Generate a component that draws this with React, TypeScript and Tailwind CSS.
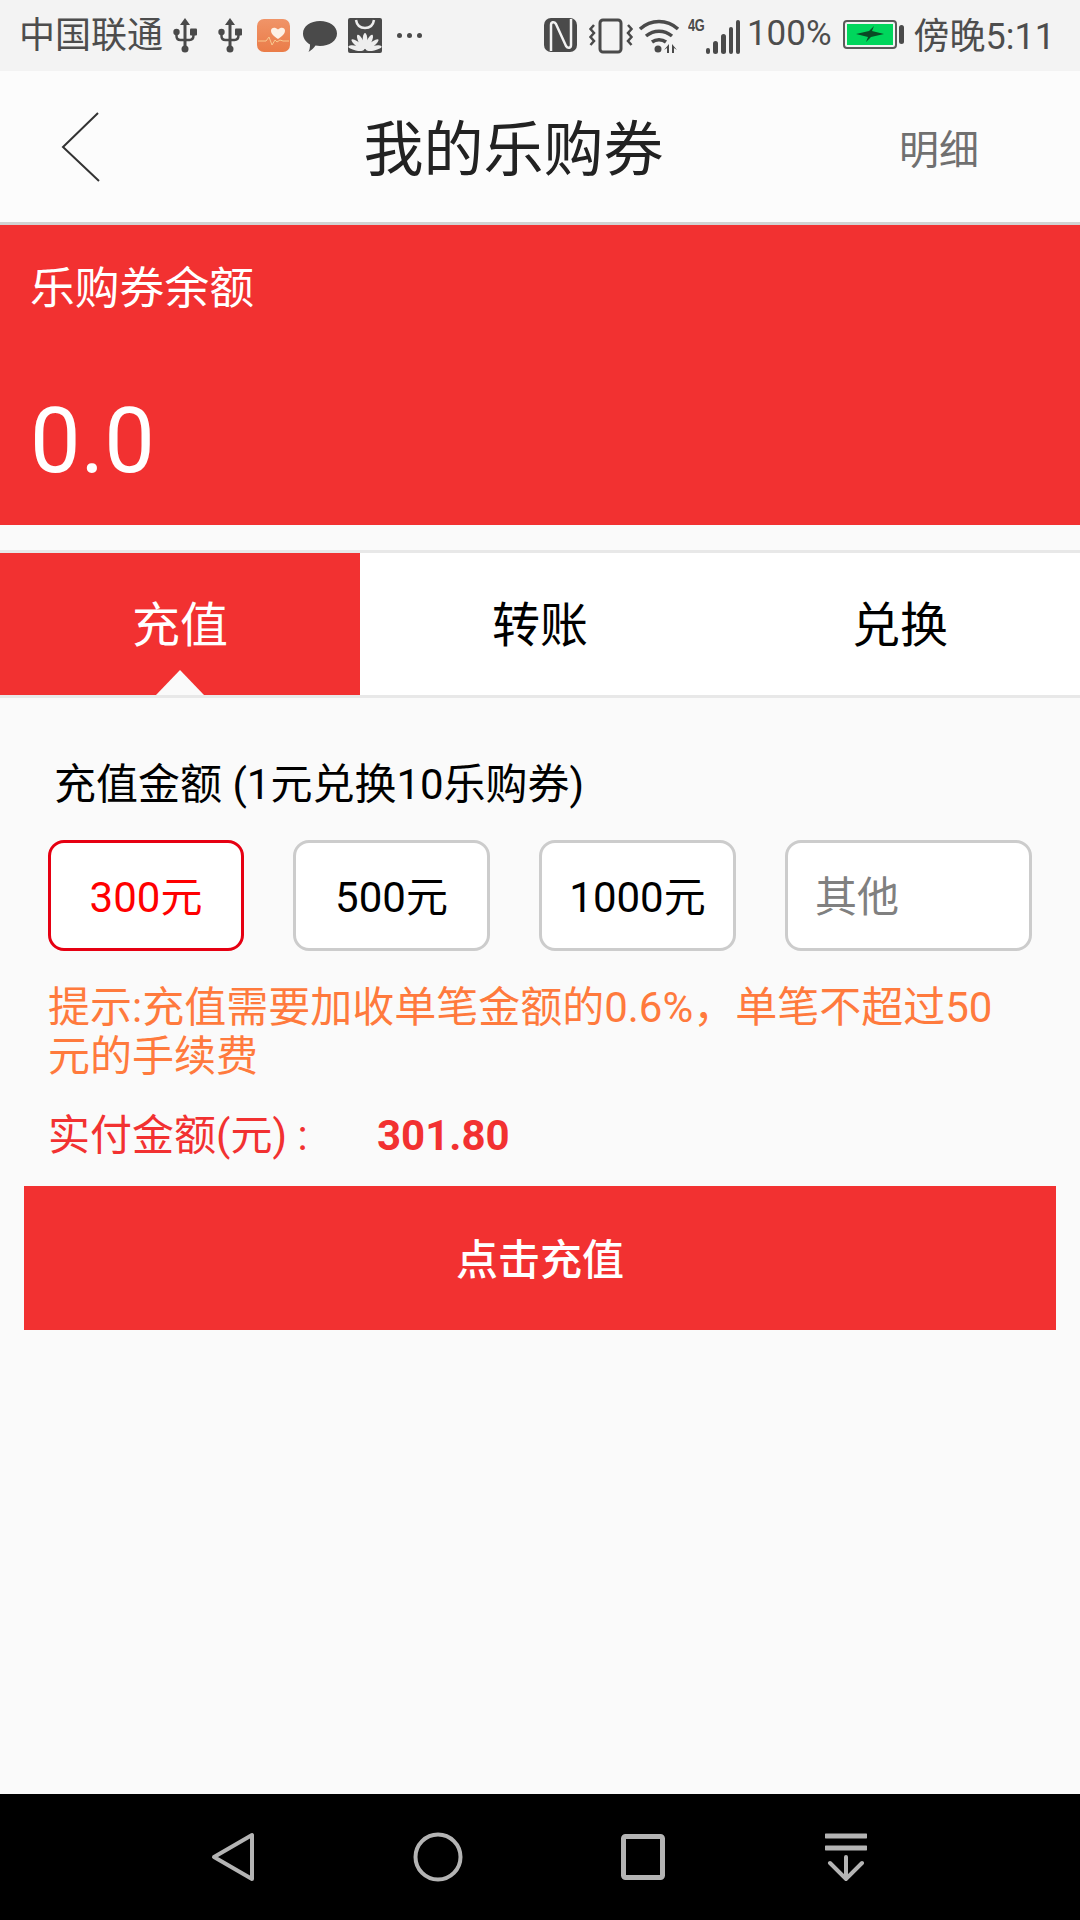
import { useState } from "react";

const font = "font-['Roboto','Noto_Sans_CJK_SC',sans-serif]";

const UsbIcon = () => (
  <svg width="24" height="36" viewBox="0 0 24 36" className="text-[#4a4a4a]">
    <path d="M12 0l5 7h-3.500v22h-3V7H7z" fill="currentColor" />
    <circle cx="12" cy="31" r="3.500" fill="currentColor" />
    <circle cx="3.500" cy="14" r="3.200" fill="currentColor" />
    <rect x="17" y="10.500" width="7" height="7" rx="1" fill="currentColor" />
    <path d="M3.500 15v3c0 3 2 4 4 4h4M20.500 15v2c0 4-2 5-4 5h-4" stroke="currentColor" strokeWidth="2.500" fill="none" />
  </svg>
);

// fan of the brand mark in the status bar
const petals = [-78, -52, -26, 0, 26, 52, 78];

const StatusLeft = () => (
  <div className="flex items-center">
    <span className="text-[36px] leading-none text-[#4d4d4d] ml-[19px] mt-[1px]">中国联通</span>
    <span className="ml-[10px]"><UsbIcon /></span>
    <span className="ml-[21px]"><UsbIcon /></span>
    <svg width="34" height="34" viewBox="0 0 34 34" className="ml-[15px]">
      <defs>
        <linearGradient id="heartBg" x1="0" y1="0" x2="0" y2="1">
          <stop offset="0" stopColor="#f09468" />
          <stop offset="1" stopColor="#ea7c48" />
        </linearGradient>
      </defs>
      <rect width="33" height="33" rx="7" fill="url(#heartBg)" />
      <path d="M21 20c-4-3-7-5-7-8.500 0-3 4-4 7-1 3-3 7-2 7 1 0 3.500-3 5.500-7 8.500z" fill="#fdf1e6" />
      <path d="M1 22h8l3-4 3 8 3-5 2 2 3-2 3 1h6" stroke="#f8c98f" strokeWidth="1" fill="none" />
    </svg>
    <svg width="36" height="34" viewBox="0 0 36 34" className="ml-[11px]">
      <path d="M18 2c9.500 0 17 5 17 12.500S27.500 27 18 27c-1.500 0-3-.2-4.500-.5C12 29 9.500 31 6.500 33c1-2 1.500-4 1.500-7.500C3.500 23 1 19 1 14.500 1 7 8.500 2 18 2z" fill="#4a4a4a" />
    </svg>
    <svg width="34" height="36" viewBox="0 0 34 36" className="ml-[10px]">
      <rect width="34" height="35" rx="2" fill="#4a4a4a" />
      <path d="M8 2c1 6 5 8 9 8s8-2 9-8" stroke="#eee" strokeWidth="2.500" fill="none" />
      {petals.map((r) => (
        <ellipse key={r} cx="17" cy="23" rx="2.400" ry="8" fill="#eee" transform={`rotate(${r} 17 32)`} />
      ))}
    </svg>
    <div className="ml-[15px] flex gap-[5px]">
      <span className="w-[5px] h-[5px] rounded-full bg-[#4a4a4a]" />
      <span className="w-[5px] h-[5px] rounded-full bg-[#4a4a4a]" />
      <span className="w-[5px] h-[5px] rounded-full bg-[#4a4a4a]" />
    </div>
  </div>
);

const StatusRight = () => (
  <div className="flex items-center">
    <svg width="34" height="35" viewBox="0 0 34 35">
      <rect width="33" height="34" rx="7" fill="#4a4a4a" />
      <path d="M7 33V7c0-3 3-4 5-1l10 22c2 3 5 2 5-1V1" stroke="#f3f3f3" strokeWidth="2.500" fill="none" />
    </svg>
    <svg width="46" height="36" viewBox="0 0 44 36" className="ml-[10px]">
      <rect x="11" y="2" width="21" height="32" rx="3" stroke="#4a4a4a" strokeWidth="3" fill="none" />
      <path d="M5 7L1.500 11 5 15l-3.500 4L5 23l-3.500 4M39 7l3.500 4-3.500 4 3.500 4-3.500 4 3.500 4" stroke="#4a4a4a" strokeWidth="2.500" fill="none" />
    </svg>
    <svg width="42" height="36" viewBox="0 0 42 36" className="ml-[4px]">
      <path d="M2 11c11-10 27-10 38 0M8 18c8-6.500 18-6.500 26 0M14 24c4-3 10-3 14 0" stroke="#4a4a4a" strokeWidth="3.500" fill="none" />
      <circle cx="20" cy="31" r="3.500" fill="#4a4a4a" />
      <path d="M31 26v9h-2v-5l-3 2zM34 26v9h2v-5l3 2z" fill="#4a4a4a" />
    </svg>
    <div className="ml-[8px] flex items-end h-[36px] relative w-[52px]">
      <span className="absolute left-0 top-[-1px] text-[16px] leading-[18px] font-bold text-[#4a4a4a] tracking-[-0.5px] font-['Liberation_Sans','Roboto',sans-serif] scale-x-[0.8] origin-left">4G</span>
      <div className="flex items-end gap-[3px] ml-[18px]">
        <span className="w-[4px] h-[6px] rounded-sm bg-[#4a4a4a]" />
        <span className="w-[5px] h-[13px] rounded-sm bg-[#4a4a4a]" />
        <span className="w-[5px] h-[20px] rounded-sm bg-[#4a4a4a]" />
        <span className="w-[4px] h-[27px] rounded-sm bg-[#4a4a4a]" />
        <span className="w-[4px] h-[34px] rounded-sm bg-[#4a4a4a]" />
      </div>
    </div>
    <span className="ml-[7px] text-[35px] leading-none text-[#4d4d4d] mt-[-4px]">100%</span>
    <div className="ml-[11px] mt-[-3px] flex items-center">
      <div className="w-[54px] h-[29px] rounded-[4px] border-2 border-[#5a5a5a] p-[2px]">
        <div className="w-full h-full bg-[#00d65c] flex items-center justify-center">
          <svg width="28" height="16" viewBox="0 0 28 16">
            <path d="M0 8l13-3 5-5-2 5 12 3-13 3-5 5 2-5z" fill="#0a4a25" />
          </svg>
        </div>
      </div>
      <span className="ml-[2px] w-[5px] h-[19px] rounded-sm bg-[#4a4a4a]" />
    </div>
    <span className="ml-[10px] text-[36px] leading-none text-[#4d4d4d] mt-[2px]">傍晚5:11</span>
  </div>
);

const StatusBar = () => (
  <div className="h-[71px] bg-[#f3f3f3] flex items-center justify-between pr-[25px] shrink-0">
    <StatusLeft />
    <StatusRight />
  </div>
);

const Header = () => (
  <div className="relative h-[154px] bg-[#fcfcfc] border-b-[3px] border-[#d2d2d2] flex items-center justify-center pt-[9px] shrink-0">
    <svg width="40" height="70" viewBox="0 0 40 70" className="absolute left-[61px] top-[41px]">
      <path d="M37 1L2 35l36 34" stroke="#333" strokeWidth="2" fill="none" />
    </svg>
    <span className="text-[60px] leading-none text-[#222] ml-[-53px]">我的乐购券</span>
    <span className="absolute left-[899px] top-[60px] text-[40px] leading-none text-[#707070]">明细</span>
  </div>
);

const Balance = () => (
  <div className="h-[300px] bg-[#f23131] text-white px-[30px] pt-[42px] shrink-0">
    <div className="text-[44.800px] leading-none">乐购券余额</div>
    <div className="text-[90px] leading-none mt-[85px]">0.0</div>
  </div>
);

const Tabs = () => (
  <div className="mt-[25px] h-[148px] bg-white border-y-[3px] border-[#e8e8e8] flex shrink-0 text-[48px] leading-none">
    <div className="relative w-[360px] bg-[#f23131] text-white flex items-center justify-center pt-[4px]">
      充值
      <div className="absolute bottom-0 left-[156px] w-[48px] h-[25px] bg-[#fafafa] [clip-path:polygon(50%_0,100%_100%,0_100%)]" />
    </div>
    <div className="w-[360px] flex items-center justify-center pt-[4px] text-black">转账</div>
    <div className="w-[360px] flex items-center justify-center pt-[4px] text-black">兑换</div>
  </div>
);

const amounts = ["300元", "500元", "1000元"];

const RechargeForm = () => {
  const [selected] = useState(0);
  return (
    <div className="pt-[64px] text-[42px] leading-none">
      <div className="pl-[54px] text-black leading-[46px]">充值金额 (1元兑换10乐购券)</div>
      <div className="flex gap-[49px] px-[48px] mt-[32px]">
        {amounts.map((a, i) => (
          <div
            key={a}
            className={
              i === selected
                ? "w-[196px] h-[111px] rounded-[16px] border-[3px] border-[#e60012] bg-white flex items-center justify-center pt-[4px] text-[#ff0000]"
                : "w-[197px] h-[111px] rounded-[16px] border-[3px] border-[#cccccc] bg-white flex items-center justify-center pt-[4px] text-black"
            }
          >
            {a}
          </div>
        ))}
        <div className="w-[247px] h-[111px] rounded-[16px] border-[3px] border-[#cccccc] bg-white flex items-center pl-[27px] pt-[4px] text-[#808080]">其他</div>
      </div>
      <div className="px-[48px] mt-[32px] text-[#ff7a3d] leading-[49px]">
        提示:充值需要加收单笔金额的0.6%，单笔不超过50元的手续费
      </div>
      <div className="flex px-[48px] mt-[32px] text-[#f23131] leading-[46px]">
        <span className="w-[329px]">实付金额(元) :</span>
        <span className="font-bold">301.80</span>
      </div>
      <div className="mx-[24px] mt-[27px] h-[144px] bg-[#f23131] text-white flex items-center justify-center pt-[6px] font-medium">点击充值</div>
    </div>
  );
};

const NavBar = () => (
  <div className="mt-auto h-[126px] bg-black flex items-center shrink-0">
    <div className="flex items-center pl-[211px]">
      <svg width="44" height="50" viewBox="0 0 44 50">
        <path d="M41 3v44L3 25z" stroke="#b4b4b4" strokeWidth="4" strokeLinejoin="round" fill="none" />
      </svg>
      <svg width="50" height="50" viewBox="0 0 50 50" className="ml-[158px]">
        <circle cx="25" cy="25" r="22.500" stroke="#b4b4b4" strokeWidth="4" fill="none" />
      </svg>
      <svg width="44" height="46" viewBox="0 0 44 46" className="ml-[158px]">
        <rect x="2.500" y="2.500" width="39" height="41" rx="2" stroke="#b4b4b4" strokeWidth="5" fill="none" />
      </svg>
      <svg width="42" height="48" viewBox="0 0 42 48" className="ml-[160px]">
        <path d="M1 3h40M1 15h40" stroke="#b4b4b4" strokeWidth="5" strokeLinecap="round" />
        <path d="M21 24v22M5 30l16 16 16-16" stroke="#b4b4b4" strokeWidth="4" strokeLinecap="round" fill="none" />
      </svg>
    </div>
  </div>
);

export default function App() {
  return (
    <div className={`w-[1080px] h-[1920px] bg-[#fafafa] flex flex-col overflow-hidden ${font}`}>
      <StatusBar />
      <Header />
      <Balance />
      <Tabs />
      <RechargeForm />
      <NavBar />
    </div>
  );
}
